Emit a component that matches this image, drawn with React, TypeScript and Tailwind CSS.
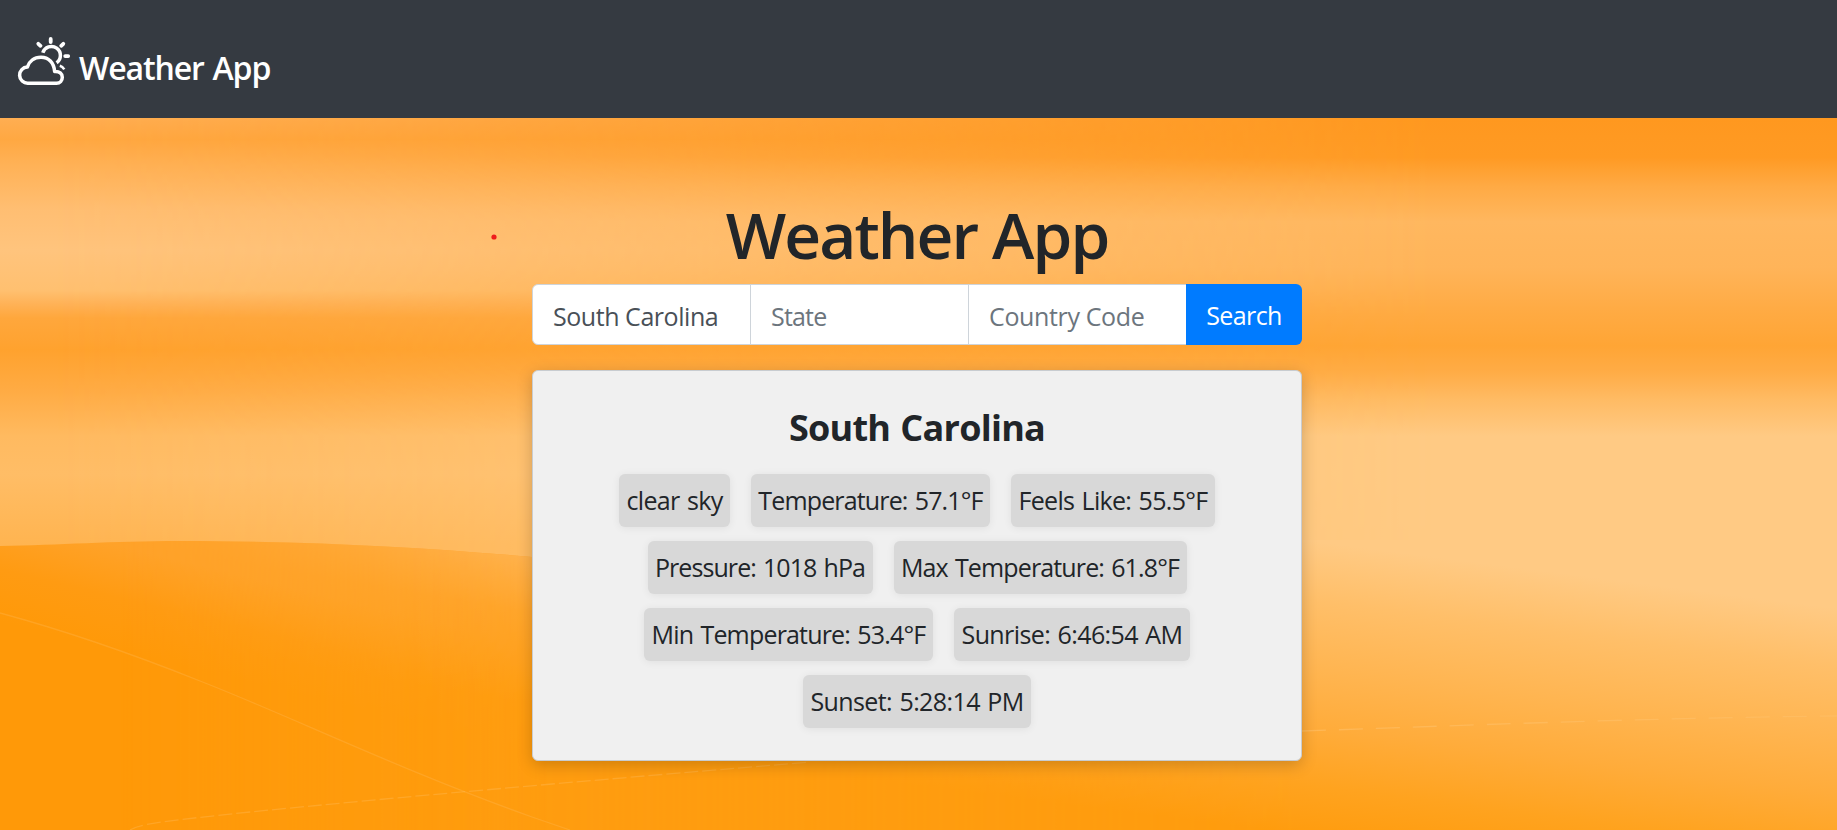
import React from 'react';

function Pill({ text, className }: { text: string; className: string }) {
  return (
    <li
      className={`flex h-[53px] items-center justify-center rounded-md bg-[#d8d8d8] pt-px whitespace-nowrap shadow-[0_1px_8px_rgba(0,0,0,0.07)] [word-spacing:1.5px] ${className}`}
    >
      {text}
    </li>
  );
}

function Background() {
  return (
    <svg
      className="absolute inset-0 h-full w-full"
      viewBox="0 118 1837 712"
      preserveAspectRatio="none"
      aria-hidden="true"
    >
      <defs>
        <linearGradient id="skyLeft" gradientUnits="userSpaceOnUse" x1="0" y1="118" x2="0" y2="830">
          <stop offset="0" stopColor="#ffae52" />
          <stop offset="0.03" stopColor="#ffa842" />
          <stop offset="0.063" stopColor="#ffb155" />
          <stop offset="0.128" stopColor="#ffbe72" />
          <stop offset="0.185" stopColor="#ffc47d" />
          <stop offset="0.242" stopColor="#ffc070" />
          <stop offset="0.261" stopColor="#ffb257" />
          <stop offset="0.281" stopColor="#ffa73c" />
          <stop offset="0.326" stopColor="#ffa22e" />
          <stop offset="0.382" stopColor="#ffab43" />
          <stop offset="0.447" stopColor="#ffba60" />
          <stop offset="0.5" stopColor="#ffbd66" />
          <stop offset="0.6" stopColor="#ffb450" />
          <stop offset="1" stopColor="#ffb450" />
        </linearGradient>
        <linearGradient id="skyRight" gradientUnits="userSpaceOnUse" x1="0" y1="118" x2="0" y2="830">
          <stop offset="0" stopColor="#ff981f" />
          <stop offset="0.055" stopColor="#ff9a23" />
          <stop offset="0.096" stopColor="#ffaa44" />
          <stop offset="0.146" stopColor="#ffb75f" />
          <stop offset="0.21" stopColor="#ffb459" />
          <stop offset="0.268" stopColor="#ffab44" />
          <stop offset="0.32" stopColor="#ffa535" />
          <stop offset="0.357" stopColor="#ffac46" />
          <stop offset="0.396" stopColor="#ffbb64" />
          <stop offset="0.447" stopColor="#ffca84" />
          <stop offset="1" stopColor="#ffca84" />
        </linearGradient>
        <linearGradient id="skyFade" gradientUnits="userSpaceOnUse" x1="0" x2="1837" y1="0" y2="0">
          <stop offset="0.03" stopColor="#fff" stopOpacity="0" />
          <stop offset="0.29" stopColor="#fff" stopOpacity="0.36" />
          <stop offset="0.78" stopColor="#fff" stopOpacity="1" />
        </linearGradient>
        <linearGradient id="hillLeft" gradientUnits="userSpaceOnUse" x1="100" y1="541" x2="76" y2="640">
          <stop offset="0" stopColor="#ffa229" />
          <stop offset="0.5" stopColor="#ff9b12" />
          <stop offset="1" stopColor="#ff9908" />
        </linearGradient>
        <linearGradient id="hillRight" gradientUnits="userSpaceOnUse" x1="1302" y1="540" x2="1265" y2="830">
          <stop offset="0" stopColor="#ffca84" />
          <stop offset="0.2" stopColor="#ffbf69" />
          <stop offset="0.43" stopColor="#ffb551" />
          <stop offset="0.63" stopColor="#ffac3b" />
          <stop offset="0.83" stopColor="#ffa31f" />
          <stop offset="1" stopColor="#ff9c0e" />
        </linearGradient>
        <linearGradient id="hillFade" gradientUnits="userSpaceOnUse" x1="400" x2="1302" y1="0" y2="0">
          <stop offset="0" stopColor="#fff" stopOpacity="0" />
          <stop offset="0.2" stopColor="#fff" stopOpacity="0.1" />
          <stop offset="1" stopColor="#fff" stopOpacity="1" />
        </linearGradient>
        <linearGradient id="crest" gradientUnits="userSpaceOnUse" x1="532" y1="552" x2="507" y2="700">
          <stop offset="0" stopColor="#ffb452" />
          <stop offset="0.4" stopColor="#ffa52a" />
          <stop offset="1" stopColor="#ff9d10" />
        </linearGradient>
        <linearGradient id="crestFade" gradientUnits="userSpaceOnUse" x1="120" x2="560" y1="0" y2="0">
          <stop offset="0" stopColor="#fff" stopOpacity="0" />
          <stop offset="1" stopColor="#fff" stopOpacity="1" />
        </linearGradient>
        <mask id="skyMask" maskUnits="userSpaceOnUse" x="0" y="118" width="1837" height="712">
          <rect y="118" width="1837" height="712" fill="url(#skyFade)" />
        </mask>
        <mask id="hillMask" maskUnits="userSpaceOnUse" x="0" y="118" width="1837" height="712">
          <rect y="118" width="1837" height="712" fill="url(#hillFade)" />
        </mask>
        <mask id="crestMask" maskUnits="userSpaceOnUse" x="0" y="118" width="1837" height="712">
          <rect y="118" width="1837" height="712" fill="url(#crestFade)" />
        </mask>
        <clipPath id="hillEdge">
          <path d="M400 546 Q470 551 532 557 L760 580 L1302 540 H1837 V830 H400 Z" />
        </clipPath>
      </defs>
      <rect y="118" width="1837" height="712" fill="url(#skyLeft)" />
      <rect y="118" width="1837" height="712" fill="url(#skyRight)" mask="url(#skyMask)" />
      <path
        d="M0 546 C60 545 110 541 180 541 C310 541 420 547 532 557 C800 585 900 540 1302 540 H1837 V830 H0 Z"
        fill="url(#hillLeft)"
      />
      <path
        d="M0 546 C60 545 110 541 180 541 C310 541 420 547 532 557 L760 580 V830 H0 Z"
        fill="url(#crest)"
        mask="url(#crestMask)"
      />
      <path d="M760 580 L1302 540 V830 H760 Z" fill="url(#crest)" />
      <path d="M400 540 H1837 V830 H400 Z" fill="url(#hillRight)" mask="url(#hillMask)" clipPath="url(#hillEdge)" />
      <g fill="none" stroke="#ffc068" strokeWidth="1.3">
        <path d="M0 613 C70 632 140 657 200 681 C290 716 400 770 532 817 L570 830" opacity="0.26" />
        <path d="M130 830 C140 824 155 822 250 812 C400 797 560 783 810 762" strokeDasharray="14 4" opacity="0.32" />
        <path d="M1302 731 C1450 726 1640 718 1837 716" strokeDasharray="24 13" opacity="0.6" />
      </g>
      <circle cx="494" cy="237" r="2.6" fill="#ee1c1c" />
    </svg>
  );
}

function CloudSun() {
  return (
    <svg
      className="h-[54px] w-[56px] shrink-0"
      viewBox="16 36 56 54"
      fill="none"
      stroke="#fff"
      strokeWidth="3.5"
      strokeLinecap="round"
      strokeLinejoin="round"
      aria-hidden="true"
    >
      <path d="M28 83.2 A8 8 0 0 1 27.4 67 C29 61.5 34 57.2 41 57.2 C48.5 57.2 54 62.5 54.6 71.5 C59.5 71 62.3 73.8 62.3 77.2 C62.3 80.8 60 83.2 56.5 83.2 Z" />
      <path d="M42.8 52.8 A9 9 0 1 1 56.6 62.8" strokeLinecap="butt" />
      <path d="M50.7 38.9 V42 M38.3 43.8 L40.5 45.8 M63.3 43.8 L61.2 45.8 M65.2 56.1 H68.2" strokeWidth="3.8" />
      <path d="M59.8 65.8 Q62.5 66.6 64.3 69.4" strokeWidth="2.6" strokeLinecap="butt" />
    </svg>
  );
}

export default function App() {
  return (
    <div className="flex h-[830px] flex-col overflow-hidden font-['Open_Sans','Noto_Sans',sans-serif] text-[#212529]">
      <header className="flex h-[118px] items-start gap-[7px] bg-[#353a41] pt-9 pl-4">
        <CloudSun />
        <span className="pt-[11px] text-[32px] leading-[42px] font-semibold tracking-[-1.1px] text-white [word-spacing:1.5px]">
          Weather App
        </span>
      </header>
      <main className="relative flex-1">
        <Background />
        <div className="relative ml-[532px] w-[770px] pt-[78px] text-center">
          <h1 className="text-[64px] leading-[77px] font-semibold tracking-[-1.9px]">Weather App</h1>
          <form className="mt-[11px] flex h-[61px] text-[25px]">
            <input
              className="w-[219px] rounded-l-md border border-[#ced4da] bg-white pt-[5px] pl-5 tracking-[-0.45px] text-[#495057] outline-none"
              defaultValue="South Carolina"
            />
            <input
              className="-ml-px w-[219px] border border-[#ced4da] bg-white pt-[5px] pl-5 tracking-[-0.8px] outline-none placeholder:text-[#6c757d]"
              placeholder="State"
            />
            <input
              className="-ml-px w-[219px] border border-[#ced4da] bg-white pt-[5px] pl-5 tracking-[-0.36px] outline-none placeholder:text-[#6c757d]"
              placeholder="Country Code"
            />
            <button
              type="button"
              className="-ml-px w-[116px] rounded-r-md bg-[#007bff] pt-[2px] tracking-[-0.6px] text-white"
            >
              Search
            </button>
          </form>
          <section className="mt-[25px] h-[391px] rounded-md border border-[#c8ccd0] bg-[#f0f0f0] pt-[30px] shadow-[0_4px_16px_rgba(0,0,0,0.2)]">
            <h2 className="mb-[19px] text-[36px] leading-[54px] font-bold tracking-[-0.75px] [word-spacing:1.5px]">
              South Carolina
            </h2>
            <ul className="flex flex-wrap justify-center gap-x-[21px] gap-y-[14px] px-[60px] text-[25px]">
              <Pill text="clear sky" className="w-[111px] tracking-[-0.65px]" />
              <Pill text="Temperature: 57.1°F" className="w-[239px] tracking-[-0.85px]" />
              <Pill text="Feels Like: 55.5°F" className="w-[204px] tracking-[-0.68px]" />
              <Pill text="Pressure: 1018 hPa" className="w-[225px] tracking-[-0.92px]" />
              <Pill text="Max Temperature: 61.8°F" className="w-[293px] tracking-[-0.86px]" />
              <Pill text="Min Temperature: 53.4°F" className="w-[289px] tracking-[-0.82px]" />
              <Pill text="Sunrise: 6:46:54 AM" className="w-[236px] tracking-[-0.6px]" />
              <Pill text="Sunset: 5:28:14 PM" className="w-[228px] tracking-[-0.6px]" />
            </ul>
          </section>
        </div>
      </main>
    </div>
  );
}
